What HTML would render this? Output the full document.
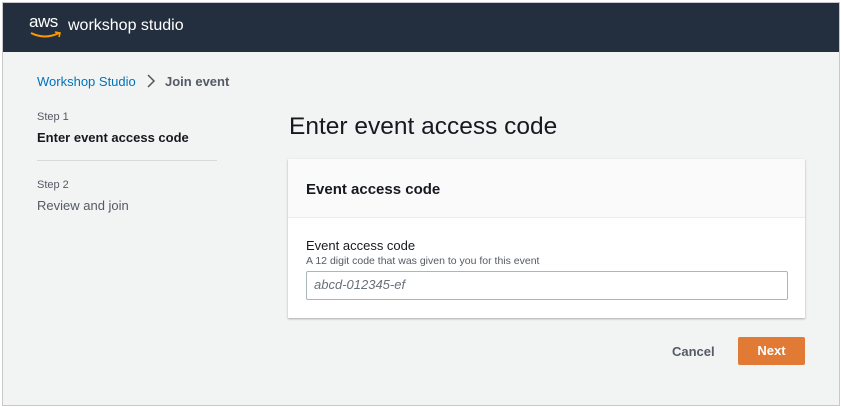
<!DOCTYPE html><html><head><style>
body{margin:0;width:841px;height:407px;background:#fff;font-family:"Liberation Sans",sans-serif;overflow:hidden}
.f{position:absolute;left:2px;top:2px;width:836px;height:402px;background:#f2f3f3;border:1px solid #c8c8c8}
.h{position:absolute;left:0;top:0;width:836px;height:49px;background:#232f3e}
.a{position:absolute}
</style></head><body><div class="f">
<div class="h">
<div class="a" style="left:26px;top:9px;color:#fff;font-size:17px;letter-spacing:-0.5px">aws</div>
<svg class="a" style="left:27px;top:27px" width="34" height="10"><path d="M1 3 Q15 10 29 3" stroke="#f90" stroke-width="2" fill="none"/><path d="M25 2 L30 3 L29 7" stroke="#f90" stroke-width="1.6" fill="none"/></svg>
<div class="a" style="left:65px;top:14px;color:#fff;font-size:16px">workshop studio</div>
</div>
<div class="a" style="left:34px;top:71px;font-size:13px;color:#0073bb">Workshop Studio</div>
<svg class="a" style="left:143px;top:71px" width="10" height="14"><path d="M2 1 L8 7 L2 13" stroke="#555" stroke-width="1.5" fill="none"/></svg>
<div class="a" style="left:162px;top:71px;font-size:13px;color:#545b64;font-weight:bold">Join event</div>
<div class="a" style="left:34px;top:108px;font-size:11px;color:#545b64">Step 1</div>
<div class="a" style="left:34px;top:127px;font-size:13px;color:#16191f;font-weight:bold">Enter event access code</div>
<div class="a" style="left:34px;top:157px;width:180px;height:1px;background:#d5dbdb"></div>
<div class="a" style="left:34px;top:176px;font-size:11px;color:#545b64">Step 2</div>
<div class="a" style="left:34px;top:195px;font-size:13px;color:#545b64">Review and join</div>
<div class="a" style="left:286px;top:110px;font-size:24.5px;color:#16191f">Enter event access code</div>
<div class="a" style="left:285px;top:156px;width:517px;height:159px;background:#fff;box-shadow:0 1px 2px rgba(0,0,0,.3)">
<div style="height:58px;background:#fafafa;border-bottom:1px solid #eaeded"></div>
<div class="a" style="left:18px;top:22px;font-size:15px;font-weight:bold;color:#16191f">Event access code</div>
<div class="a" style="left:18px;top:79px;font-size:13px;color:#16191f">Event access code</div>
<div class="a" style="left:18px;top:96px;font-size:10.5px;color:#545b64">A 12 digit code that was given to you for this event</div>
<div class="a" style="left:18px;top:112px;width:480px;height:27px;border:1px solid #aab7b8;border-radius:2px"></div>
<div class="a" style="left:26px;top:118px;font-size:13px;font-style:italic;color:#687078">abcd-012345-ef</div>
</div>
<div class="a" style="left:669px;top:341px;font-size:13px;font-weight:bold;color:#545b64">Cancel</div>
<div class="a" style="left:735px;top:334px;width:67px;height:28px;background:#e07a35;border-radius:2px;color:#fff;font-size:13px;font-weight:bold;text-align:center;line-height:28px">Next</div>
</div></body></html>
